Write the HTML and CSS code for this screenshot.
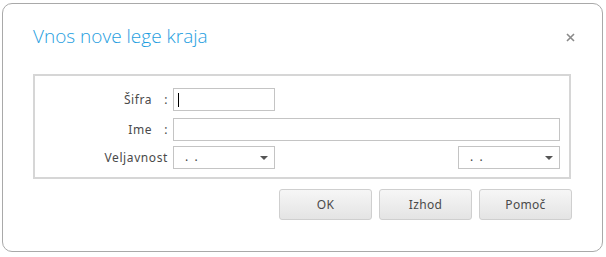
FILE: index.html
```html
<!DOCTYPE html>
<html>
<head>
<meta charset="utf-8">
<link rel="stylesheet" href="styles.css">
</head>
<body>
<div class="dialog">
  <div class="header">
    <div class="title">Vnos nove lege kraja</div>
    <svg class="close" width="9" height="9" viewBox="0 0 9 9"><path d="M1 1L8 8M8 1L1 8" stroke="#8a8a8a" stroke-width="1.6" fill="none"/></svg>
  </div>
  <div class="fieldset">
    <div class="row r1">
      <div class="label">Šifra<span class="colon">:</span></div>
      <div class="input short"><span class="caret"></span></div>
    </div>
    <div class="row r2">
      <div class="label">Ime<span class="colon">:</span></div>
      <div class="input long"></div>
    </div>
    <div class="row r3">
      <div class="label">Veljavnost</div>
      <div class="select"><span class="dots">.&nbsp;&nbsp;.</span><span class="arrow"></span></div>
      <div class="spacer"></div>
      <div class="select"><span class="dots">.&nbsp;&nbsp;.</span><span class="arrow"></span></div>
    </div>
  </div>
  <div class="buttons">
    <div class="btn">OK</div>
    <div class="btn">Izhod</div>
    <div class="btn">Pomoč</div>
  </div>
</div>
</body>
</html>
```
FILE: styles.css
```css
html, body { margin: 0; padding: 0; background: #fff; }
body { padding: 3px 3px 0 2px; font-family: "Noto Sans", "DejaVu Sans", sans-serif; font-size: 12px; color: #4a4a4a; }
.dialog {
  box-sizing: border-box;
  width: 601px;
  height: 249px;
  border: 1px solid #a9a9a9;
  border-radius: 10px;
  background: #fff;
  padding: 0 0 0 30px;
}
.header { display: flex; align-items: center; height: 70px; padding-right: 27px; }
.title { flex: 1; font-family: "Open Sans", sans-serif; font-weight: 300; font-size: 19px; color: #1e9ee0; padding-bottom: 7px; }
.close { display: block; margin-bottom: 3px; }
.fieldset {
  box-sizing: border-box;
  width: 538px;
  height: 105px;
  border: 2px solid #d6d6d6;
  padding: 12px 0 0 0;
}
.row { display: flex; align-items: center; }
.r2 { margin-top: 7px; }
.r3 { margin-top: 5px; }
.label { width: 138px; text-align: right; padding-right: 5px; letter-spacing: 0.6px; box-sizing: border-box; }
.colon { margin-left: 12px; }
.input, .select { box-sizing: border-box; height: 23px; border: 1px solid #c4c4c4; background: #fff; }
.short { width: 102px; display: flex; align-items: center; padding-left: 4px; }
.caret { display: block; width: 1px; height: 14px; background: #000; }
.long { width: 387px; }
.select { width: 102px; display: flex; align-items: center; padding: 0 6px 0 11px; }
.dots { flex: 1; color: #444; padding-bottom: 3px; }
.arrow { width: 0; height: 0; border-left: 4px solid transparent; border-right: 4px solid transparent; border-top: 4px solid #555; }
.spacer { width: 183px; }
.buttons { display: flex; justify-content: flex-end; gap: 7px; padding: 10px 30px 0 0; }
.btn {
  box-sizing: border-box;
  width: 93px;
  height: 31px;
  border: 1px solid #cfcfcf;
  border-radius: 3px;
  background: linear-gradient(#f6f6f6, #e4e4e4);
  display: flex; align-items: center; justify-content: center;
  letter-spacing: 0.3px;
}
```
